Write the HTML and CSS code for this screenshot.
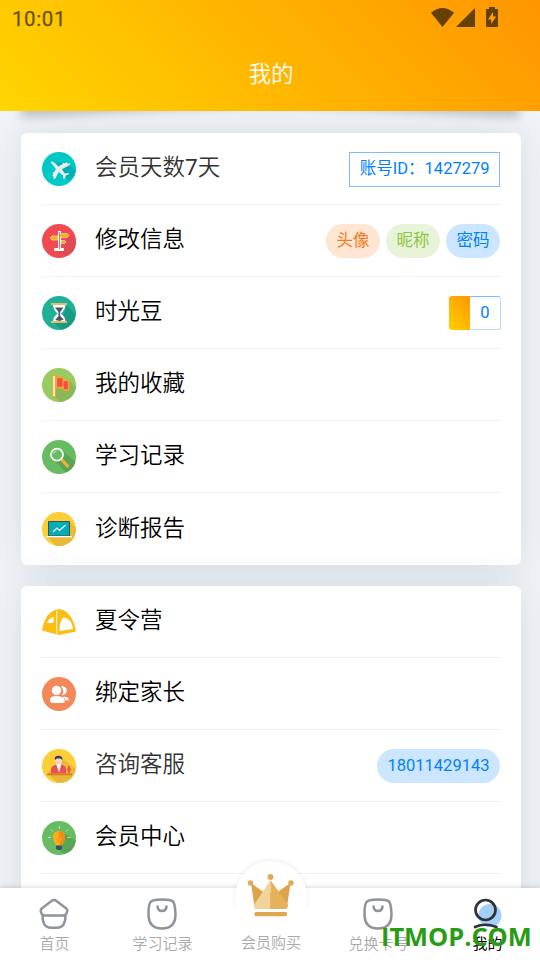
FILE: index.html
```html
<!DOCTYPE html>
<html lang="zh-CN">
<head>
<meta charset="utf-8">
<title>我的</title>
<link rel="stylesheet" href="styles.css">
</head>
<body>
<div class="screen">
  <header class="header">
    <div class="status">
      <span class="clock">10:01</span>
      <svg class="status-icons" width="68" height="22" viewBox="0 0 68 22" fill="#664000">
        <path d="M0 4.800Q11.500-4.600 23 4.800L11.500 19Z"/><path d="M25 19L44 0V19Z"/>
        <path d="M55 1h3V-1h6v2h3V18q0 1-1 1H56q-1 0-1-1Z"/><path d="M62 4l-5 7.500h3.200V16l5-7.500h-3.200Z" fill="#ffa300"/>
      </svg>
    </div>
    <h1 class="title">我的</h1>
  </header>
  <main class="content">
    <section class="card">
      <div class="row">
        <svg class="icon" viewBox="0 0 34 34"><circle cx="17" cy="17" r="17" fill="#00c8c8"/><path d="M10 11L27 28Q32 25 34 19L23 10Z" fill="#00b0b2"/><path d="M9 9.500q1.500-.5 3.500 1.200l4 3.800 4-2.500.3-1.500 1.300.7 2.600-.9.400 1 3 .2v1.200l-8.200 4.500 2.800 4.200 4-.4.500 1-3.300 1.500-1.300 3.600-1.200-.3-.4-3.400-4.300-3.400-3.500 6.800-1.500.2-.3-2.200-1-.7.900-2.300-1-1 1.700-.5 1.900-3.400-3.800-4.800Q9 11.500 9 9.500Z" fill="#e9edf0"/></svg>
        <span class="label soft">会员天数<span class="days">7</span>天</span>
        <span class="account">账号ID：1427279</span>
      </div>
      <div class="row">
        <svg class="icon" viewBox="0 0 34 34"><circle cx="17" cy="17" r="17" fill="#f04b50"/><path d="M22 27L26 10 34 18Q34 29 24 32L13 27Z" fill="#df4a55"/><path d="M12.500 24.500h9v2h-9Z" fill="#fff" stroke="#fff"/><path d="M16 7h3v18h-3Z" fill="#fff"/><path d="M18 9.500h7l2 2-2 2h-7ZM16 12h-6l-2 2 2 2h6ZM19 16.500h3.500l1.500 1.500-1.500 1.500H19Z" fill="#ffad0d" stroke="#f9e5ca" stroke-width=".7"/><path d="M17.500 8v17" stroke="#df4a55" stroke-width=".8"/></svg>
        <span class="label">修改信息</span>
        <div class="tags"><span class="tag orange">头像</span><span class="tag green">昵称</span><span class="tag blue">密码</span></div>
      </div>
      <div class="row">
        <svg class="icon" viewBox="0 0 34 34"><circle cx="17" cy="17" r="17" fill="#1eb198"/><path d="M25 9l8.700 10Q32 30 20 33.700L12 27l10-9Z" fill="#199a84"/><path d="M11 8h12.500q0 6-4.700 9.500 4.700 3 4.700 8.500H11q0-5.500 4.700-8.500Q11 14 11 8Z" fill="#fff"/><path d="M13 11.500h8.500l-3.300 4.500v4l3.500 3.500-4 1.500-4.500-1 3.300-4v-4Z" fill="#48566a"/><path d="M9 7h16v2H9ZM9 25h16v2H9Z" fill="#e9bc68"/></svg>
        <span class="label">时光豆</span>
        <div class="beans"><span class="bean-fill"></span><span class="bean-count">0</span></div>
      </div>
      <div class="row">
        <svg class="icon" viewBox="0 0 34 34"><circle cx="17" cy="17" r="17" fill="#9acb60"/><path d="M26 12l8 7Q32 32 18 34l-6-6 1-9 13 4Z" fill="#8bb758"/><path d="M10.500 7h3.500v22h-3.500Z" fill="#f8a525"/><path d="M11.300 8h1.500v20h-1.500Z" fill="#fff"/><path d="M14.500 9.500h6.500v10h-6.500ZM21 12.500h5.500v9.500H22l-1-2Z" fill="#f24c50" stroke="#f8a525" stroke-width="1.400"/></svg>
        <span class="label">我的收藏</span>
      </div>
      <div class="row">
        <svg class="icon" viewBox="0 0 34 34"><circle cx="17" cy="17" r="17" fill="#67bc62"/><path d="M20 10l13.500 12Q31 30 24 32.500L11 19Z" fill="#58a556"/><path d="M20.500 20.500l5 5.500" stroke="#f8ad35" stroke-width="3.300" stroke-linecap="round"/><circle cx="15" cy="14.700" r="6" fill="#67bc62" stroke="#fff" stroke-width="1.700"/><path d="M11.500 14q.5-2.500 3-3" stroke="#d7efd4" stroke-width=".8" fill="none"/></svg>
        <span class="label">学习记录</span>
      </div>
      <div class="row">
        <svg class="icon" viewBox="0 0 34 34"><circle cx="17" cy="17" r="17" fill="#fcce38"/><path d="M28 10l6 6Q34 31 19 34h-5L6 25Z" fill="#e9ba36"/><path d="M6.500 9.500h21V24h-21Z" fill="#00adb8" stroke="#4a4f3c" stroke-width="1"/><path d="M4 24h26v1.300H4Z" fill="#fff"/><path d="M11 20l4-4 2.500 2.500L23.500 13" fill="none" stroke="#fff" stroke-width="1.100"/></svg>
        <span class="label">诊断报告</span>
      </div>
    </section>
    <section class="card">
      <div class="row">
        <svg class="icon" viewBox="0 0 34 34"><path d="M0 25.500Q3 8 13.500 5L17 4l4 1Q31 9.500 34 26.500L17 30Z" fill="#fdbd14"/><path d="M5 18q1.500-4.500 6.500-6v6Z" fill="#fff"/><path d="M17.500 26q0-10 4-13.500 8.500 1 9.500 11.500Z" fill="#fff"/><path d="M14.700 6v23" stroke="#fff" stroke-width=".9"/></svg>
        <span class="label">夏令营</span>
      </div>
      <div class="row">
        <svg class="icon" viewBox="0 0 34 34"><circle cx="17" cy="17" r="17" fill="#f38959"/><g fill="#fff"><circle cx="14.500" cy="13.500" r="4.700"/><path d="M8 22.500q0-3.500 6.500-3.500t8 3.500q1.500 3.500-3 3.500H11q-3 0-3-3.500ZM19 9q5 0 6 4 0 4-5 5.500 3-4.500-1-9.500ZM20.500 19.700q6-.5 6.300 2.600 0 1.200-1.500 1.200H24q-.8-2.300-3.500-3.800Z"/></g></svg>
        <span class="label">绑定家长</span>
      </div>
      <div class="row">
        <svg class="icon" viewBox="0 0 34 34"><circle cx="17" cy="17" r="17" fill="#fcce38"/><path d="M20 9l14 11Q31 34 16 34L5 25Z" fill="#e9b936"/><path d="M9 24.500v-4q0-4 6-5h4q5 1 5 5v4Z" fill="#ef4d52"/><path d="M14 14.500h5.500L17 23.500Z" fill="#fff"/><circle cx="16.700" cy="11.500" r="3.600" fill="#ffd0bd"/><path d="M13 11q-1.500-4 3.700-4.200Q21 7 20.300 11l-2-1.600h-3.500Z" fill="#38424d"/><path d="M27 17v7M25 20.500h4" stroke="#ef5a43" stroke-width="2"/><path d="M5 24.500h25v1.800H5Z" fill="#d47e27"/></svg>
        <span class="label soft">咨询客服</span>
        <span class="tag blue">18011429143</span>
      </div>
      <div class="row">
        <svg class="icon" viewBox="0 0 34 34"><circle cx="17" cy="17" r="17" fill="#67bc62"/><path d="M22 12l12 8Q32 31 22 33l-8-6Z" fill="#58a556"/><path d="M17 10q6 0 6 6 0 3.500-3 8.500h-6q-3-5-3-8.500 0-6 6-6Z" fill="#ffab1c"/><path d="M17 10q6 0 6 6 0 3.500-3 8.500h-3l3-8-3 2Z" fill="#f28c12"/><path d="M14 24.500h6v3l-1.500 1.500h-3L14 27.500Z" fill="#34566c"/><path d="M17.500 5v3M9 8.500l2 2M26 8.500l-2 2M6 16.500h3M25.500 16.500h3" stroke="#d9edbb" stroke-width=".8"/></svg>
        <span class="label">会员中心</span>
      </div>
      <div class="row"></div>
    </section>
  </main>
  <nav class="nav">
    <a class="tab">
      <svg class="tab-icon" viewBox="0 0 34 34" fill="none" stroke="#8f939a" stroke-width="2.400" stroke-linejoin="round"><path d="M14.500 4q2.500-2 5 0l9.500 7.200q2 1.600 1 4-.8 3.300-4 3.300H8q-3.200 0-4-3.300-1-2.400 1-4Z"/><path d="M5.500 18.500q0 12.200 8.500 12.200h6q8.500 0 8.500-12.200"/></svg>
      <span>首页</span>
    </a>
    <a class="tab">
      <svg class="tab-icon" viewBox="0 0 34 34" fill="none" stroke="#8f939a" stroke-width="2.500"><path d="M17 2.500q9 0 11 2T30.500 17q0 14.500-13.500 14.500T3.500 17Q3.500 6.500 6 4.500T17 2.500Z"/><path d="M12.500 9.500q.5 4.500 4.500 4.500t4.500-4.500" stroke-linecap="round"/></svg>
      <span>学习记录</span>
    </a>
    <a class="tab featured">
      <svg class="crown" viewBox="0 0 48 44"><path d="M4 9l14 10h11L43.500 9 40 33q0 2-2 2H10q-2 0-2.500-2Z" fill="#dda44d"/><path d="M23.500 6v29H10q-3 0-3-4Z" fill="#f1d49a"/><path d="M23.500 6L41 31q0 4-3 4H23.500Z" fill="#e7b15c"/><g fill="#e2aa53"><circle cx="3.500" cy="9" r="2.700"/><circle cx="23.500" cy="3" r="2.900"/><circle cx="44" cy="9" r="2.700"/></g><rect x="7.500" y="38" width="32.500" height="4.200" rx="1.500" fill="#dfa750"/></svg>
      <span>会员购买</span>
    </a>
    <a class="tab">
      <svg class="tab-icon" viewBox="0 0 34 34" fill="none" stroke="#8f939a" stroke-width="2.500"><path d="M17 2.500q9 0 11 2T30.500 17q0 14.500-13.500 14.500T3.500 17Q3.500 6.500 6 4.500T17 2.500Z"/><path d="M12.500 9.500q.5 4.500 4.500 4.500t4.500-4.500" stroke-linecap="round"/></svg>
      <span>兑换卡号</span>
    </a>
    <a class="tab active">
      <svg class="tab-icon" viewBox="0 0 34 34"><circle cx="21" cy="18.500" r="11.500" fill="#a3d0fb"/><g fill="none" stroke="#303338" stroke-width="2.700" stroke-linecap="round"><circle cx="16.500" cy="13" r="10"/><path d="M6 30q10-4.500 21.500 0"/></g></svg>
      <span>我的</span>
    </a>
  </nav>
  <div class="watermark">ITMOP.COM</div>
</div>
</body>
</html>
```

FILE: styles.css
```css
* { box-sizing: border-box; }
body { margin: 0; font-family: Roboto, "Noto Sans CJK SC", sans-serif; }
.screen {
  position: relative;
  width: 540px;
  height: 960px;
  overflow: hidden;
  background: #f0f4f9;
  isolation: isolate;
}
.header {
  position: relative;
  height: 111px;
  background: linear-gradient(45deg, #ffd500, #ff9500);
}
.header::before, .header::after {
  content: "";
  position: absolute;
  z-index: -1;
  bottom: 10px;
  width: 250px;
  height: 20px;
  box-shadow: 0 10px 10px rgba(0, 0, 0, .2);
}
.header::before { left: 20px; transform: rotate(-3deg); }
.header::after { right: 20px; transform: rotate(3deg); }
.status {
  display: flex;
  justify-content: space-between;
  height: 36px;
  padding: 8px 41px 0 12px;
}
.status-icons { overflow: visible; }
.clock {
  color: #665200;
  font-size: 20.500px;
  font-weight: 400;
  -webkit-text-stroke: .25px #665200;
  line-height: 22px;
  letter-spacing: .6px;
}
.title {
  margin: 0;
  padding-left: 2px;
  color: #fff;
  font-size: 22.500px;
  font-weight: 350;
  line-height: 76px;
  text-align: center;
}
.content {
  display: flex;
  flex-direction: column;
  gap: 21px;
  padding: 22px 19px 0 21px;
}
.header .title { height: 75px; }
.card {
  padding: 0 21px;
  border-radius: 6px;
  background: #fff;
  box-shadow: 0 0 40px rgba(20, 35, 35, .11);
}
.row {
  display: flex;
  align-items: center;
  height: 72px;
  border-bottom: 1px solid #f0f1f2;
}
.row:last-child { border-bottom: 0; }
.icon { width: 34px; height: 34px; margin-right: 19px; flex: none; }
.label {
  flex: 1;
  color: #000;
  font-size: 22.500px;
  font-weight: 350;
  line-height: 30px;
  padding-bottom: 2.500px;
}
.days { font-weight: 400; }
.soft { color: #333; }
.account {
  height: 35px;
  margin-top: 1px;
  padding: 0 9.500px 0 10px;
  border: 1px solid #80bfff;
  color: #0080ff;
  font-size: 16.500px;
  line-height: 32px;
}
.tags { display: flex; gap: 6px; }
.tag {
  height: 34px;
  padding: 0 10.500px;
  border-radius: 17px;
  font-size: 16.500px;
  line-height: 34px;
}
.orange { background: #ffe6d2; color: #f37b1d; }
.green { background: #e8f4d9; color: #8dc63f; }
.blue { background: #cce6ff; color: #0081ff; }
.beans { display: flex; width: 52px; height: 34px; margin-right: -1px; }
.bean-fill {
  width: 21px;
  border-radius: 3px 0 0 3px;
  background: linear-gradient(45deg, #ffd000, #ff9700);
}
.bean-count {
  flex: 1;
  border: 1px solid #b9dcff;
  border-top-color: #80bfff;
  border-left: 0;
  border-radius: 0 3px 3px 0;
  color: #0081ff;
  font-size: 16.500px;
  line-height: 31px;
  text-align: center;
}
.nav {
  position: absolute;
  left: 0;
  right: 0;
  bottom: 0;
  height: 72px;
  display: grid;
  grid-template-columns: repeat(5, 1fr);
  background: #fff;
  box-shadow: 0 -1px 5px rgba(0, 0, 0, .15);
}
.tab {
  display: flex;
  flex-direction: column;
  align-items: center;
  padding-top: 9px;
  color: #aaa;
  font-size: 15px;
  font-weight: 350;
  line-height: 26px;
}
.tab span { padding-left: 1px; }
.tab-icon { width: 34px; height: 34px; }
.active { color: #000; font-weight: 400; }
.active span { padding-left: 3px; }
.featured {
  position: relative;
  isolation: isolate;
  padding: 0 0 0 2px;
}
.featured span { padding-left: 0; }
.featured::before {
  content: "";
  position: absolute;
  z-index: -1;
  top: -27px;
  left: 50%;
  width: 72px;
  height: 72px;
  margin-left: -35px;
  border-radius: 50%;
  background: #fff;
  box-shadow: 0 -1px 5px rgba(0, 0, 0, .07);
}
.featured::after {
  content: "";
  position: absolute;
  z-index: -1;
  top: 22px;
  left: 0;
  right: 0;
  height: 50px;
  background: #fff;
}
.crown { width: 48px; height: 44px; margin: -14px 0 12px; }
.watermark {
  position: absolute;
  left: 381px;
  top: 918px;
  color: #289c14;
  font: 700 25.400px/36px "Open Sans", sans-serif;
  white-space: nowrap;
}
```
